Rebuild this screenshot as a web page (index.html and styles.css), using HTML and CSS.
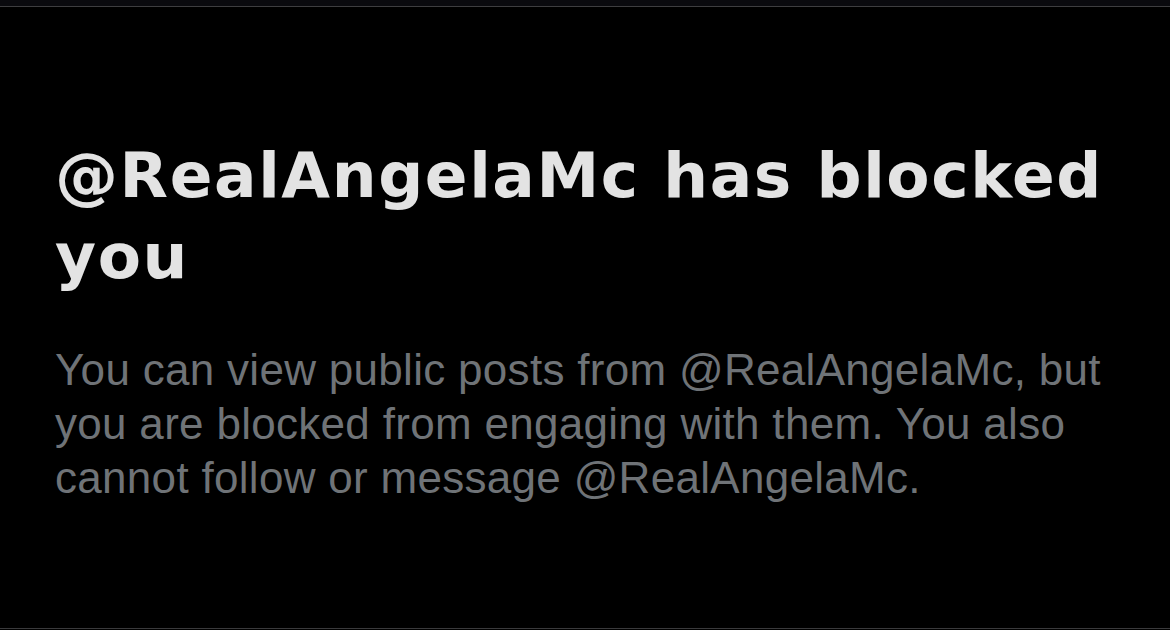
FILE: index.html
```html
<!DOCTYPE html>
<html lang="en">
<head>
    <meta charset="UTF-8">
    <meta name="viewport" content="width=device-width, initial-scale=1.0">
    <title>Blocked</title>
    <link rel="stylesheet" href="styles.css">
</head>
<body>
    <div class="top-strip"></div>
    <main class="blocked">
        <h1 class="blocked-title">@RealAngelaMc has blocked you</h1>
        <p class="blocked-text">You can view public posts from @RealAngelaMc, but you are blocked from engaging with them. You also cannot follow or message @RealAngelaMc.</p>
    </main>
    <div class="bottom-line"></div>
</body>
</html>
```
FILE: styles.css
```css
html, body {
    margin: 0;
    height: 100%;
    background-color: #000;
}
body {
    display: flex;
    flex-direction: column;
    font-family: "Liberation Sans", Arial, sans-serif;
}
.top-strip {
    height: 6px;
    background-color: #0a0a0e;
    border-bottom: 1px solid #3e3e40;
}
.blocked {
    flex: 1;
    padding: 128px 0 0 55px;
    max-width: 1070px;
}
.blocked-title {
    margin: 0;
    font-family: "DejaVu Sans", sans-serif;
    font-size: 63px;
    line-height: 81px;
    font-weight: bold;
    letter-spacing: 1.6px;
    color: #e3e3e3;
}
.blocked-text {
    margin: 46px 0 0;
    font-size: 44px;
    line-height: 54px;
    letter-spacing: 0.3px;
    color: #6f7377;
}
.bottom-line {
    height: 1px;
    margin-bottom: 1px;
    background-color: #3a3a3c;
}
```
